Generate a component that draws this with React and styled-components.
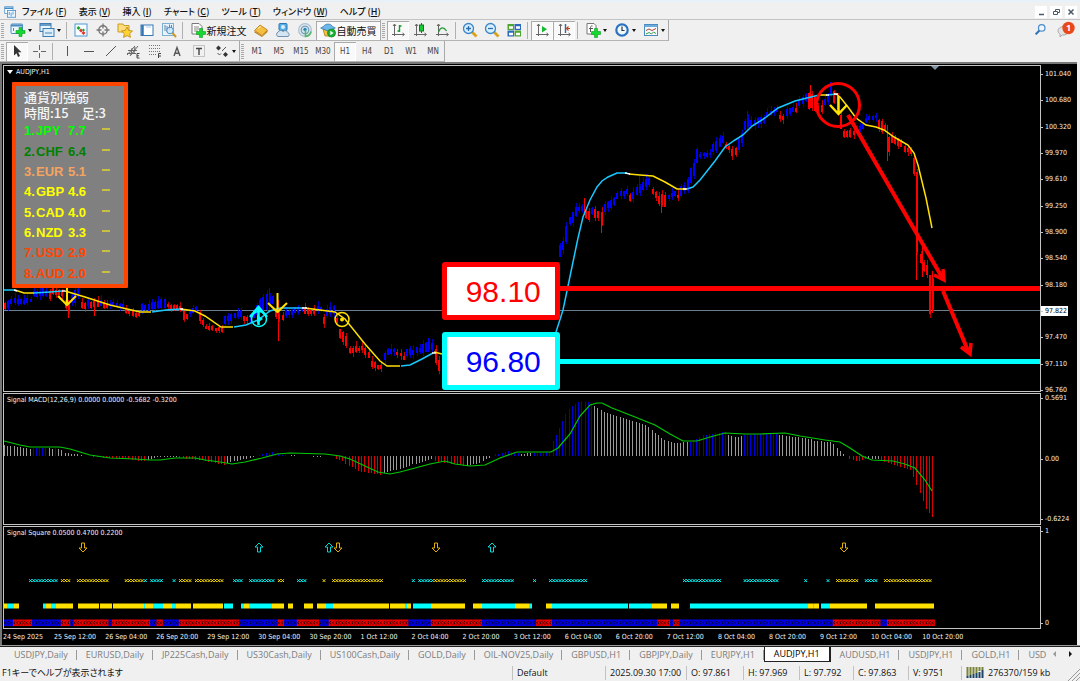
import React, { useState } from "react";
import styled, { createGlobalStyle } from "styled-components";

const GlobalStyle = createGlobalStyle`
  * { box-sizing: border-box; }
  body {
    margin: 0;
    background: #f0f0f0;
    font-family: "Open Sans", "Noto Sans CJK JP", sans-serif;
    font-size: 9px;
    color: #111;
  }
  button { font: inherit; color: inherit; border: 0; padding: 0; background: none; }
`;

const Window = styled.div`
  display: flex;
  flex-direction: column;
  height: 100vh;
  min-height: 500px;
  overflow: hidden;
`;

/* ---------- menu ---------- */

const MenuBar = styled.header`
  display: flex;
  align-items: center;
  height: 20px;
  padding: 2px 3px 0 4px;
  border-top: 2px solid #e9f1f8;
  border-bottom: 1px solid #c3c3c3;
`;

const MenuNav = styled.nav`
  display: flex;
  flex: 1;
  gap: 12px;
  padding-left: 6px;
`;

const MenuItem = styled.button`
  font-family: "Noto Sans CJK JP", sans-serif;
  font-size: 9px;
  font-weight: 500;
  line-height: 14px;
  font-feature-settings: "palt";
  white-space: nowrap;
`;

const WindowControls = styled.div`
  display: flex;
  gap: 3px;
`;

const ControlButton = styled.button`
  display: flex;
  width: 12px;
  height: 12px;
  background: #fff;
`;

/* ---------- toolbars ---------- */

const ToolbarRow = styled.div`
  display: flex;
  align-items: stretch;
  height: 21px;
`;

const Toolbar = styled.div`
  display: flex;
  align-items: center;
  border-right: 1px solid #a8a8a8;
  border-bottom: 1px solid #b4b4b4;
`;

const Spacer = styled.div`
  flex: 1;
`;

const Grip = styled.span`
  width: 3px;
  height: 15px;
  margin: 0 2px 0 1px;
  background: repeating-linear-gradient(#a9a9a9 0 1px, #f0f0f0 1px 2px);
`;

const Separator = styled.span`
  width: 1px;
  height: 17px;
  margin: 0 3px 0 2px;
  background: #b0b0b0;
`;

const ToolButton = styled.button`
  display: flex;
  align-items: center;
  justify-content: center;
  gap: 2px;
  width: ${({ $menu }) => ($menu ? 29 : 22)}px;
  height: 19px;
  background: ${({ $pressed }) => ($pressed ? "#f9f9f9" : "transparent")};
  box-shadow: ${({ $pressed }) =>
    $pressed ? "inset 1px 1px #aaa, inset -1px -1px #fff" : "none"};
`;

const LabelButton = styled(ToolButton)`
  width: auto;
  min-width: 64px;
  gap: 1px;
  font-family: "Noto Sans CJK JP", sans-serif;
  font-size: 10px;
  font-feature-settings: "palt";
  white-space: nowrap;
`;

const FrameButton = styled(ToolButton)`
  font-family: "DejaVu Sans Condensed", "DejaVu Sans", sans-serif;
  font-size: 8px;
  color: #444;
`;

const Corner = styled.div`
  display: flex;
  align-items: center;
  gap: 10px;
  padding-right: 5px;
`;

const Caret = styled.span`
  border: 2px solid transparent;
  border-top: 3px solid #111;
  border-bottom: 0;
`;

/* ---------- chart ---------- */

const ChartWindow = styled.main`
  flex: 1;
  min-height: 0;
  display: grid;
  grid-template-columns: minmax(0, 1fr) 36px;
  grid-template-rows: minmax(0, 327fr) minmax(0, 132fr) minmax(0, 103fr) 14px;
  row-gap: 1px;
  margin-right: 3px;
  padding: 1px 0 1px 1px;
  background: #000;
  border-top: 2px solid #777;
  border-left: 2px solid #777;
  color: #f2f2f2;
  font-family: "DejaVu Sans Condensed", "DejaVu Sans", sans-serif;
  font-size: 7px;
  line-height: 10px;
`;

const Pane = styled.section`
  position: relative;
  border: 1px solid #c4c4c4;
`;

const Plot = styled.svg`
  display: block;
  position: absolute;
  inset: 0;
  width: 100%;
  height: 100%;
`;

const PaneTitle = styled.h2`
  position: relative;
  display: flex;
  align-items: center;
  gap: 3px;
  margin: 1px 0 0 3px;
  font-size: 7px;
  font-weight: normal;
  line-height: 10px;
`;

const TitleCaret = styled(Caret)`
  border-width: 3px;
  border-top: 4px solid #fff;
  border-bottom: 0;
`;

const Scale = styled.div`
  display: flex;
  flex-direction: column;
  justify-content: space-between;
  margin: ${({ $price }) => ($price ? "4px 0 -3px" : "0 0 1px")};
`;

const ScaleLabel = styled.span`
  position: relative;
  align-self: flex-start;
  line-height: 10px;
  padding: 0 1px 0 4px;
  white-space: nowrap;
  ${({ $current }) => $current && "background: #fff; color: #000;"}
  &::before {
    content: "";
    position: absolute;
    left: -1px;
    top: 5px;
    width: 3px;
    height: 1px;
    background: #c4c4c4;
  }
`;

const TimeScale = styled.div`
  display: flex;
`;

const TimeLabel = styled.span`
  flex: 0 0 4.92%;
  line-height: 14px;
  white-space: nowrap;
`;

const StrengthPanel = styled.aside`
  position: absolute;
  left: 8px;
  top: 16px;
  width: 116px;
  padding: 3px 0 0 8px;
  background: #808080;
  border: 4px solid #ff4500;
  border-radius: 1px;
`;

const StrengthHeading = styled.p`
  margin: 0;
  color: #f4f4f4;
  font-family: "Noto Sans CJK JP", sans-serif;
  font-size: 13px;
  font-weight: 500;
  line-height: 16px;
  white-space: pre;
`;

const StrengthTable = styled.table`
  width: 100%;
  height: 163px;
  border-collapse: collapse;
  font-family: "Liberation Sans", sans-serif;
  font-size: 13px;
  font-weight: bold;
  line-height: 16px;
  td { padding: 0; }
`;

const StrengthRow = styled.tr`
  color: ${({ $color }) => $color};
`;

const Dash = styled.span`
  display: block;
  width: 8px;
  height: 2px;
  margin-bottom: 4px;
  background: #c8c040;
`;

const PriceTag = styled.div`
  position: absolute;
  left: 42.3%;
  top: ${({ $top }) => $top}%;
  width: 118px;
  height: 58px;
  padding-left: 4px;
  background: #fff;
  border: 5px solid ${({ $border }) => $border};
  border-radius: 3px;
  color: ${({ $color }) => $color};
  font-family: "Liberation Sans", sans-serif;
  font-size: 30px;
  line-height: 50px;
  text-align: center;
`;

/* ---------- bottom bars ---------- */

const TabBar = styled.div`
  display: flex;
  height: 19px;
  border-top: 1px solid #999;
  box-shadow: inset 0 1px #222;
`;

const Tabs = styled.nav`
  display: flex;
  flex: 1;
  min-width: 0;
  overflow: hidden;
  padding: 1px 0 0 5px;
`;

const Tab = styled.button`
  flex: none;
  height: 15px;
  padding: 0 9px;
  line-height: 14px;
  color: ${({ $active }) => ($active ? "#000" : "#7c7c7c")};
  white-space: nowrap;
  ${({ $active }) =>
    $active
      ? "background: #fff; border: solid #222; border-width: 0 2px 1px 1px;"
      : "background: linear-gradient(#999, #999) right center / 1px 10px no-repeat;"}
`;

const TabScroll = styled.div`
  display: flex;
  align-items: center;
  gap: 13px;
  padding: 0 8px 2px 5px;
`;

const ScrollArrow = styled.button`
  border: 3px solid transparent;
  ${({ $back }) =>
    $back ? "border-right: 3px solid #999; border-left: 0;" : "border-left: 3px solid #111; border-right: 0;"}
`;

const StatusBar = styled.footer`
  display: flex;
  align-items: center;
  height: 17px;
  padding-left: 2px;
  font-feature-settings: "palt";
`;

const StatusText = styled.span`
  flex: 1;
  white-space: nowrap;
`;

const StatusCell = styled.span`
  display: flex;
  align-items: center;
  gap: 3px;
  width: ${({ $width }) => $width}px;
  padding-left: 4px;
  border-left: 1px solid #c2c2c2;
  line-height: 14px;
  white-space: nowrap;
`;

/* ---------- icons ---------- */

const Icon = ({ children, size = 16 }) => (
  <svg width={size} height={size} viewBox="0 0 16 16" fill="none" aria-hidden="true">
    {children}
  </svg>
);

const Plus = ({ x = 11, y = 11 }) => (
  <path
    d={`M${x - 1.5} ${y - 4.5}h3v3h3v3h-3v3h-3v-3h-3v-3h3z`}
    fill="#14d92e"
    stroke="#0a9a20"
    strokeWidth=".6"
  />
);

const Axes = () => (
  <path d="M4.5 2v12M2 12.5h12M3 4l1.500-2L6 4M12.500 11l2 1.500-2 1.500" stroke="#666" />
);

const Lens = ({ minus }) => (
  <>
    <path d="M10 10l4.500 4.500" stroke="#d9a21b" strokeWidth="2.800" />
    <circle cx="6.500" cy="6.500" r="5" fill="#d7efff" stroke="#3c87c8" strokeWidth="1.300" />
    <path d={minus ? "M4 6.500h5" : "M4 6.500h5M6.500 4v5"} stroke="#2c6faf" strokeWidth="1.300" />
  </>
);

const icons = {
  logo: (
    <>
      <rect x="1" y="1" width="11" height="9" fill="#fff" stroke="#3d8ac7" />
      <path d="M1 3h11" stroke="#3d8ac7" strokeWidth="2" />
      <rect x="4.500" y="6" width="11" height="9" fill="#eaf5fc" stroke="#3d8ac7" />
      <path d="M7 8v4M9.500 9v5M12 7.500v4" stroke="#3d8ac7" />
    </>
  ),
  newChart: (
    <>
      <rect x="1" y="2" width="11.500" height="9.500" rx="1" fill="#eaf5fc" stroke="#4a8cc2" />
      <path d="M1 3.500h11.500" stroke="#4a8cc2" strokeWidth="2" />
      <path d="M3.500 6v3" stroke="#4a8cc2" />
      <Plus x={10.5} y={10} />
    </>
  ),
  profiles: (
    <>
      <rect x="1" y="1.500" width="11" height="8" fill="#eaf5fc" stroke="#3d7db5" />
      <path d="M1 3h11" stroke="#3d7db5" strokeWidth="1.500" />
      <rect x="4" y="6.500" width="11" height="8" fill="#dceefa" stroke="#3d7db5" />
      <path d="M6 11h7" stroke="#8fbbdd" strokeWidth="2" />
    </>
  ),
  market: (
    <>
      <rect x="2" y="2" width="12" height="12" fill="#f8fcff" stroke="#4d9ad0" />
      <path d="M5.500 4l2 2-2 2-2-2z" fill="#18a832" />
      <path d="M8 6.500l2 2-2 2-2-2zM10.500 9l2 2-2 2-2-2z" fill="#e2322b" />
      <path d="M10.500 6.500l1.500 1.500-1.500 1.500L9 8z" fill="#18a832" />
    </>
  ),
  navigator: (
    <>
      <circle cx="8" cy="8" r="4.200" stroke="#777" strokeWidth="1.400" />
      <path d="M8 1.500v5M8 9.500v5M1.500 8h5M9.500 8h5" stroke="#777" strokeWidth="1.300" />
    </>
  ),
  favorites: (
    <>
      <path d="M1 2h5l1 1.500h5V10H1z" fill="#ffdd7a" stroke="#c99a26" />
      <path
        d="M10 5l1.700 3.400 3.800.6-2.800 2.600.7 3.800-3.400-1.800-3.400 1.800.7-3.800L4.500 9l3.800-.6z"
        fill="#ffd332"
        stroke="#b98712"
        strokeWidth=".8"
      />
    </>
  ),
  terminal: (
    <>
      <rect x="2" y="3" width="12" height="10.500" fill="#fff" stroke="#3476b4" />
      <path d="M3.500 3v10.500" stroke="#3476b4" strokeWidth="2.500" />
      <path d="M7 5h5" stroke="#aacde8" />
    </>
  ),
  tester: (
    <>
      <rect x="1.500" y="1.500" width="11" height="12" fill="#e7f4fd" stroke="#7fb0d4" />
      <path d="M4 3v6M6 4v6M8.500 2.500V8M10.500 3v3" stroke="#5f84a3" />
      <circle cx="9" cy="8.500" r="3.300" fill="#cce8fa" fillOpacity=".8" stroke="#4f8fc4" />
      <path d="M11.500 11l3.500 4" stroke="#c99a26" strokeWidth="2" />
    </>
  ),
  newOrder: (
    <>
      <path d="M2 1.500h7l3 3V12H2z" fill="#fff" stroke="#777" />
      <path d="M4 5h5M4 7h5M4 9h4" stroke="#888" />
      <Plus x={11} y={11} />
    </>
  ),
  gold: (
    <>
      <path d="M1.500 8.500l5.500-5.500 7.500 5-5.500 5.500z" fill="#f5be3e" stroke="#b57a14" strokeWidth=".8" />
      <path d="M1.500 9l7.500 5 5.500-6v2l-5.500 5-7.500-4.500z" fill="#b97c11" />
      <path d="M5 6.500l3-2" stroke="#fff0b0" />
    </>
  ),
  hosting: (
    <>
      <rect x="4" y="1.500" width="8" height="7" rx="1" fill="#55aee8" stroke="#2c76b3" />
      <circle cx="8" cy="5" r="2" fill="#d5effd" />
      <path d="M3 14.500a2.300 2.300 0 010-4.300 3 3 0 015-.7 3 3 0 015 1.300 2 2 0 010 3.700z" fill="#d4e4f0" stroke="#6f93b2" />
    </>
  ),
  signals: (
    <>
      <circle cx="8" cy="8" r="6.300" stroke="#a9c2d4" strokeWidth="1.300" />
      <circle cx="8" cy="8" r="3.800" fill="#d3e8f2" stroke="#6f9dbb" strokeWidth="1.300" />
      <circle cx="8" cy="7.500" r="1.700" fill="#2f84b4" />
      <path d="M8.500 8v6.500c3-.5 5-2 5.500-5" stroke="#58b46a" strokeWidth="1.600" />
    </>
  ),
  expert: (
    <>
      <path d="M3 7l2 7h6l2-7z" fill="#f3c33a" stroke="#a87b18" strokeWidth=".8" />
      <path d="M.7 6c1-1 2.800-1 3.300-2C5 1.500 11 1.500 12 4c.5 1 2.300 1 3.300 2L8 9z" fill="#6db8ea" stroke="#2f74a8" strokeWidth=".8" />
      <circle cx="11.500" cy="11" r="4" fill="#1eb235" stroke="#0b8a1c" strokeWidth=".8" />
      <path d="M10.300 8.800l3.200 2.200-3.200 2.200z" fill="#fff" />
    </>
  ),
  bars: (
    <>
      <Axes />
      <path d="M9.500 3v7M9.500 4h2M7.500 9h2" stroke="#159a2b" strokeWidth="1.400" />
    </>
  ),
  candles: (
    <>
      <Axes />
      <path d="M9.500 1v10" stroke="#0d7c1d" />
      <rect x="7.500" y="3" width="4" height="6" fill="#1cc936" stroke="#0d7c1d" />
    </>
  ),
  line: (
    <>
      <Axes />
      <path d="M4.500 10c2-5 5-5.500 8-1" stroke="#219a33" strokeWidth="1.300" />
    </>
  ),
  zoomIn: <Lens />,
  zoomOut: <Lens minus />,
  tile: (
    <>
      <rect x="1.500" y="2" width="6.500" height="6" fill="#4da532" />
      <rect x="8.500" y="2" width="6.500" height="6" fill="#2c69bd" />
      <rect x="1.500" y="8.500" width="6.500" height="6" fill="#2c69bd" />
      <rect x="8.500" y="8.500" width="6.500" height="6" fill="#4da532" />
      <path d="M3 5.500h4M10 5.500h4M3 12h4M10 12h4" stroke="#fff" strokeWidth="2.500" />
    </>
  ),
  autoScroll: (
    <>
      <Axes />
      <path d="M8 4l5 3.300-5 3.300z" fill="#19b832" />
    </>
  ),
  shift: (
    <>
      <Axes />
      <path d="M9.500 2v9" stroke="#2b6ba6" strokeWidth="1.400" />
      <path d="M14 6.500h-3.500M12.500 4.500l-2 2 2 2" stroke="#c4471f" strokeWidth="1.200" />
    </>
  ),
  indicators: (
    <>
      <path d="M2 1.500h7l2 2V12H2z" fill="#fff" stroke="#777" />
      <path d="M7.500 4c-2-.5-2 1-2 2.500V10M4 6.500h4" stroke="#555" />
      <Plus x={11} y={11} />
    </>
  ),
  clock: (
    <>
      <circle cx="8" cy="8" r="5.700" fill="#eef8ff" stroke="#2a72c0" strokeWidth="2.200" />
      <path d="M8 4.500v4h2.500" stroke="#333" strokeWidth="1.200" />
    </>
  ),
  template: (
    <>
      <rect x="1.500" y="2.500" width="13" height="11" fill="#f4faff" stroke="#4a8cc2" />
      <path d="M1.500 4h13" stroke="#6fabda" strokeWidth="2" />
      <path d="M3 8.500l3-1.500 3 1.500 4-2" stroke="#b0432a" />
      <path d="M3 12l3-1.500L8.500 12l2-2 2.500 1.500" stroke="#3d9a49" />
    </>
  ),
  search: (
    <>
      <path d="M7 9l-5 5" stroke="#2d6fb7" strokeWidth="2.600" />
      <circle cx="9.500" cy="6" r="4" fill="#eef6fc" stroke="#4b8bc9" strokeWidth="1.500" />
    </>
  ),
  cursor: <path d="M5 2v10.500l2.500-2.300L9 14l2-1-1.800-3.800h3.300z" fill="#333" />,
  crosshair: <path d="M8.500 2v5M8.500 10v5M2 8.500h5M10 8.500h5" stroke="#666" />,
  vline: <path d="M8.500 3v10" stroke="#555" />,
  hline: <path d="M3 8.500h10" stroke="#555" />,
  trend: <path d="M3 13L13 3" stroke="#555" />,
  channel: (
    <>
      <path d="M2 12L10 3M5 13L13 3M3 7.500h9M2 10.500h9M6 12l1-7M9 10l1-6" stroke="#666" />
      <path d="M14.500 10.500h-2.500v4.500h2.500M12 12.800h2" stroke="#444" />
    </>
  ),
  fibo: (
    <>
      <path d="M2 2.500h12M2 5.500h12M2 8.500h12M2 11.500h7" stroke="#777" strokeDasharray="1 1" />
      <path d="M11.500 15v-4.500H14M11.500 13H14" stroke="#444" />
    </>
  ),
  text: <path d="M5 13l3-8.500L11 13M6 10.200h4" stroke="#555" strokeWidth="1.400" />,
  label: (
    <>
      <rect x="2.500" y="2.500" width="11" height="11" stroke="#999" strokeDasharray="1 1" />
      <path d="M5 5.500h6M8 5.500V12" stroke="#444" strokeWidth="1.400" />
    </>
  ),
  arrows: (
    <>
      <path d="M4.500 2.500l2.500 2.500-2.500 2.500L2 5zM11.500 9l2.500 2.500-2.500 2.500L9 11.500z" fill="#333" />
      <path d="M8 8l4-4M3.500 10l2 2 1.500-1.500" stroke="#555" />
    </>
  ),
};

/* ---------- chart data ---------- */

const MENU = [
  ["ファイル", "F"],
  ["表示", "V"],
  ["挿入", "I"],
  ["チャート", "C"],
  ["ツール", "T"],
  ["ウィンドウ", "W"],
  ["ヘルプ", "H"],
];

const FRAMES = ["M1", "M5", "M15", "M30", "H1", "H4", "D1", "W1", "MN"];

const STRENGTH = [
  ["JPY", "7.7", "#00ff00"],
  ["CHF", "6.4", "#008000"],
  ["EUR", "5.1", "#f4a460"],
  ["GBP", "4.6", "#ffff00"],
  ["CAD", "4.0", "#ffff00"],
  ["NZD", "3.3", "#ffff00"],
  ["USD", "2.9", "#ff4500"],
  ["AUD", "2.0", "#ff4500"],
];

const PRICES = [
  "101.040", "100.680", "100.320", "99.970", "99.610", "99.250", "98.900",
  "98.540", "98.180", "97.822", "97.470", "97.110", "96.760",
];

const TIMES = [
  "24 Sep 2025", "25 Sep 12:00", "26 Sep 04:00", "26 Sep 20:00", "29 Sep 12:00",
  "30 Sep 04:00", "30 Sep 20:00", "1 Oct 12:00", "2 Oct 04:00", "2 Oct 20:00",
  "3 Oct 12:00", "6 Oct 04:00", "6 Oct 20:00", "7 Oct 12:00", "8 Oct 04:00",
  "8 Oct 20:00", "9 Oct 12:00", "10 Oct 04:00", "10 Oct 20:00",
];

const TABS = [
  "USDJPY,Daily", "EURUSD,Daily", "JP225Cash,Daily", "US30Cash,Daily",
  "US100Cash,Daily", "GOLD,Daily", "OIL-NOV25,Daily", "GBPUSD,H1", "GBPJPY,Daily",
  "EURJPY,H1", "AUDJPY,H1", "AUDUSD,H1", "USDJPY,H1", "GOLD,H1", "USD",
];

const UP = "#0000ff";
const DOWN = "#ff0000";
const AQUA = "#00ffff";
const GOLD = "#ffe000";
const STEP = 3.19;

// [from x, to x, colour, centre y at start, centre y at end, body height]
const RUNS = [
  [5, 6, DOWN, 307, 307, 6], [8, 17, UP, 304, 299, 6], [18, 30, UP, 302, 301, 5],
  [31, 46, UP, 294, 292, 7], [47, 52, DOWN, 293, 296, 9], [53, 62, DOWN, 291, 293, 6],
  [63, 70, DOWN, 303, 307, 11], [71, 79, UP, 300, 293, 12], [80, 86, DOWN, 305, 307, 9],
  [87, 90, UP, 303, 303, 6], [91, 97, DOWN, 306, 304, 7], [98, 103, UP, 301, 303, 7],
  [104, 108, DOWN, 305, 307, 6], [109, 124, UP, 304, 305, 4], [125, 140, DOWN, 311, 315, 5],
  [141, 165, UP, 308, 304, 8], [166, 180, DOWN, 306, 308, 5], [181, 188, DOWN, 314, 318, 7],
  [189, 196, UP, 313, 310, 6], [197, 203, DOWN, 314, 322, 8], [204, 222, DOWN, 328, 330, 4],
  [223, 241, UP, 321, 314, 7], [242, 250, DOWN, 317, 321, 5], [251, 258, UP, 318, 310, 8],
  [259, 273, UP, 305, 301, 13], [274, 282, DOWN, 313, 318, 6], [283, 303, UP, 314, 309, 5],
  [304, 317, DOWN, 310, 312, 6], [318, 322, UP, 309, 309, 4], [323, 325, DOWN, 321, 321, 8],
  [326, 334, UP, 312, 311, 7], [335, 339, DOWN, 317, 326, 9], [340, 348, DOWN, 333, 343, 9],
  [349, 362, DOWN, 350, 349, 5], [363, 371, DOWN, 350, 357, 7], [372, 381, DOWN, 364, 367, 5],
  [382, 385, UP, 359, 355, 9], [386, 396, UP, 353, 349, 5], [397, 405, DOWN, 354, 358, 4],
  [406, 420, UP, 353, 350, 6], [421, 433, UP, 348, 346, 8], [434, 441, DOWN, 349, 374, 14],
  [558, 563, UP, 255, 245, 12], [564, 569, UP, 240, 229, 13], [570, 578, UP, 221, 209, 10],
  [579, 583, UP, 208, 209, 5], [584, 589, DOWN, 214, 215, 9], [590, 592, UP, 212, 212, 6],
  [593, 600, DOWN, 214, 214, 10], [600, 604, DOWN, 218, 218, 15], [605, 616, UP, 208, 201, 7],
  [617, 627, UP, 196, 191, 5], [628, 631, DOWN, 198, 199, 8], [632, 640, UP, 196, 189, 8],
  [641, 650, UP, 187, 181, 8], [651, 657, DOWN, 190, 195, 7], [658, 665, DOWN, 200, 200, 10],
  [666, 675, UP, 197, 194, 4], [676, 678, DOWN, 197, 197, 4], [679, 690, UP, 192, 183, 10],
  [691, 696, UP, 176, 164, 12], [697, 699, UP, 157, 157, 16], [700, 712, UP, 155, 154, 4],
  [713, 723, UP, 149, 139, 8], [724, 731, DOWN, 146, 149, 5], [732, 735, DOWN, 152, 152, 7],
  [736, 742, UP, 149, 138, 13], [743, 749, UP, 127, 121, 10], [750, 766, UP, 124, 119, 7],
  [767, 779, UP, 114, 109, 5], [780, 783, DOWN, 118, 118, 5], [784, 794, UP, 114, 108, 6],
  [795, 798, DOWN, 110, 110, 5], [799, 808, UP, 103, 96, 7], [809, 815, DOWN, 101, 103, 14],
  [816, 822, DOWN, 108, 108, 6], [823, 829, UP, 104, 98, 8], [830, 833, UP, 89, 89, 11],
  [834, 838, DOWN, 96, 104, 16], [839, 843, DOWN, 117, 128, 12], [844, 855, DOWN, 133, 134, 6],
  [856, 865, UP, 130, 125, 4], [866, 876, UP, 120, 117, 4], [877, 885, DOWN, 123, 128, 9],
  [886, 888, DOWN, 140, 140, 29], [889, 891, DOWN, 144, 144, 20], [892, 901, DOWN, 140, 144, 6],
  [902, 911, DOWN, 148, 152, 5], [912, 914, DOWN, 165, 165, 19], [915, 917, DOWN, 212, 212, 76],
  [918, 923, DOWN, 257, 261, 9], [924, 929, DOWN, 267, 273, 9], [930, 933, DOWN, 294, 294, 34],
];

const WICKS = [
  [278, 300, 341, DOWN], [269, 288, 310, UP], [584, 198, 215, DOWN], [601, 215, 233, DOWN],
  [661, 200, 213, DOWN], [639, 176, 190, UP], [747, 111, 130, UP], [810, 85, 108, DOWN],
  [68, 300, 318, DOWN], [887, 125, 161, DOWN], [916, 240, 280, DOWN], [922, 244, 277, DOWN],
  [932, 271, 313, DOWN], [94, 300, 316, DOWN], [428, 338, 352, UP],
];

const noise = (n) => {
  const v = Math.sin(n * 12.9898) * 43758.5453;
  return v - Math.floor(v);
};

const barX = (i) => 5 + i * STEP;

const CANDLES = [];
for (let i = 0; i < 292; i++) {
  const x = barX(i);
  const run = RUNS.find(([a, b]) => x >= a - 0.6 && x <= b + 0.6);
  if (!run) continue;
  const [a, b, color, y0, y1, h] = run;
  const t = b > a ? Math.min(1, Math.max(0, (x - a) / (b - a))) : 0;
  const mid = y0 + (y1 - y0) * t + (noise(i) - 0.5) * 2;
  const body = h * (0.65 + noise(i + 40) * 0.55);
  CANDLES.push({
    x: Math.round(x),
    color,
    top: mid - body / 2,
    body,
    high: mid - body / 2 - noise(i + 7) * 5,
    low: mid + body / 2 + noise(i + 19) * 4,
  });
}

const AVERAGE = [
  [AQUA, "4,290 15,290"],
  [GOLD, "15,290 24,293 34,293"],
  [AQUA, "34,293 50,292 62,291"],
  [GOLD, "65,291 85,297 110,305 140,312 151,312"],
  [AQUA, "152,312 166,310 180,309"],
  [GOLD, "181,309 195,311 205,316 221,327 233,327"],
  [AQUA, "234,327 246,325 258,320 270,311 280,308 304,308"],
  [GOLD, "305,308 320,310 335,312 345,319 365,344 380,361 387,366 400,366"],
  [AQUA, "401,366 410,365 422,359 433,353"],
  [GOLD, "434,352 442,354"],
  [AQUA, "556,332 563,310 568,286 573,262 578,238 583,217 590,200 597,187 602,181 608,177 617,173 627,173"],
  [GOLD, "629,174 640,175 653,176 665,182 677,189 686,189"],
  [AQUA, "687,189 693,187 700,180 715,161 725,147 735,140 743,135 752,126 765,118 778,108 795,101 815,96 820,95"],
  [GOLD, "820,95 827,95"],
  [AQUA, "828,95 836,94"],
  [GOLD, "836,94 840,97 848,107 856,118 866,125 876,127 884,130 894,137 908,145 914,153 918,165 926,198 932,228"],
];

const TURNS = [
  "14,290 17,291", "62,291 65,291", "180,309 183,309", "302,308 307,308", "432,353 436,353",
  "625,173 630,174", "683,189 687,189", "826,95 829,95", "834,94 838,94",
];

const GREY = "#9a9a9a";
const BLUE = "#0000d8";
const RED = "#d80000";

// [from x, to x, colour, height at start, height at end]
const MACD = [
  [4, 33, GREY, 11, 7], [34, 46, BLUE, 8, 8], [47, 54, GREY, 8, 7], [55, 57, BLUE, 8, 8],
  [58, 65, GREY, 7, 5], [66, 84, GREY, 3, 1], [93, 130, RED, -1, -3], [131, 146, RED, -4, -5],
  [147, 156, GREY, -4, -2], [157, 179, GREY, -1, -1], [180, 200, RED, -2, -4],
  [201, 226, RED, -4, -9], [227, 256, GREY, -7, -1], [259, 274, BLUE, 1, 4],
  [275, 286, BLUE, 2, 1], [290, 322, GREY, 1, -1], [335, 345, RED, -2, -6],
  [346, 358, RED, -8, -14], [359, 384, RED, -15, -19], [385, 410, GREY, -17, -10],
  [411, 434, GREY, -9, -3], [435, 465, RED, -5, -10], [466, 480, GREY, -10, -7],
  [481, 491, GREY, -6, -1], [494, 510, BLUE, 1, 5], [511, 519, BLUE, 4, 3],
  [520, 532, GREY, 2, 3], [533, 550, BLUE, 3, 4], [551, 568, BLUE, 9, 45],
  [569, 580, BLUE, 47, 55], [581, 593, BLUE, 55, 53], [594, 606, GREY, 51, 43],
  [607, 632, GREY, 43, 36], [633, 648, GREY, 35, 31], [649, 662, GREY, 29, 18],
  [663, 675, GREY, 17, 13], [676, 690, GREY, 13, 14], [691, 702, BLUE, 14, 20],
  [703, 726, BLUE, 21, 24], [727, 736, GREY, 21, 19], [737, 743, GREY, 19, 20],
  [744, 779, BLUE, 21, 23], [780, 812, GREY, 21, 17], [813, 832, GREY, 15, 14],
  [833, 845, GREY, 13, 1], [848, 858, RED, -2, -5], [859, 868, RED, -5, -3],
  [869, 879, GREY, -3, -3], [880, 912, RED, -4, -14], [913, 924, RED, -18, -46],
  [925, 934, RED, -50, -62],
];

const SIGNAL_LINE =
  "4,441 20,445 30,447 60,447 70,449 90,455 110,458 135,459 150,460 160,460 175,458 195,458 205,460 220,462 232,464 245,462 262,458 277,454 290,453 325,454 340,456 350,459 365,466 378,472 390,474 400,472 430,464 445,461 455,464 470,466 485,465 500,458 517,452 551,452 558,448 570,434 580,416 590,405 597,403 602,403 612,408 630,415 655,425 670,434 683,441 697,441 710,437 725,433 745,434 760,434 785,433 800,436 825,440 840,442 850,448 862,456 872,460 893,461 905,464 915,468 925,480 932,491";

const MACD_BARS = [];
for (let i = 0; i < 292; i++) {
  const x = barX(i);
  const seg = MACD.find(([a, b]) => x >= a - 0.6 && x <= b + 0.6);
  if (!seg) continue;
  const [a, b, color, h0, h1] = seg;
  const h = h0 + ((h1 - h0) * (x - a)) / (b - a);
  MACD_BARS.push({ x: Math.round(x), color, h });
}

const CROSSES = [
  [31, 46, AQUA], [49, 56, AQUA], [60, 68, GOLD], [79, 97, GOLD], [101, 107, GOLD],
  [124, 141, GOLD], [143, 145, AQUA], [152, 158, AQUA], [162, 163, AQUA], [172, 173, AQUA],
  [178, 190, GOLD], [197, 222, GOLD], [235, 240, AQUA], [251, 273, AQUA], [277, 282, GOLD],
  [299, 304, AQUA], [309, 310, GOLD], [322, 323, GOLD], [334, 381, GOLD], [414, 415, AQUA],
  [420, 432, AQUA], [436, 464, GOLD], [484, 512, AQUA], [535, 536, AQUA], [545, 546, AQUA],
  [551, 585, AQUA], [682, 721, AQUA], [745, 776, AQUA], [806, 807, AQUA], [828, 829, AQUA],
  [838, 853, GOLD], [857, 858, GOLD], [867, 875, AQUA], [886, 932, GOLD],
];

const BLOCKS = [
  [4, 7, GOLD], [7, 14, AQUA], [14, 19, GOLD], [43, 46, AQUA], [46, 51, GOLD], [51, 56, AQUA],
  [56, 73, GOLD], [78, 99, GOLD], [100, 112, GOLD], [113, 144, GOLD], [144, 145, AQUA],
  [145, 153, GOLD], [153, 163, AQUA], [163, 172, GOLD], [172, 176, AQUA], [176, 191, GOLD],
  [193, 223, GOLD], [224, 233, AQUA], [241, 244, AQUA], [244, 249, GOLD], [249, 272, AQUA],
  [272, 284, GOLD], [288, 293, GOLD], [304, 313, GOLD], [317, 326, GOLD], [326, 333, AQUA],
  [333, 389, GOLD], [390, 405, GOLD], [405, 407, AQUA], [407, 411, GOLD], [413, 431, AQUA],
  [431, 465, GOLD], [473, 482, GOLD], [482, 515, AQUA], [515, 529, GOLD], [529, 532, AQUA],
  [546, 552, GOLD], [552, 628, AQUA], [629, 652, AQUA], [652, 667, GOLD], [671, 679, GOLD],
  [690, 808, AQUA], [808, 813, GOLD], [813, 814, AQUA], [814, 819, GOLD], [821, 830, AQUA],
  [830, 867, GOLD], [875, 934, GOLD],
];

const TREND_FLIPS = [
  [4, UP], [12, DOWN], [33, UP], [60, DOWN], [71, UP], [74, DOWN], [108, UP], [113, DOWN],
  [150, UP], [157, DOWN], [163, UP], [178, DOWN], [240, UP], [277, DOWN], [285, UP],
  [297, DOWN], [318, UP], [329, DOWN], [409, UP], [430, DOWN], [483, UP], [535, DOWN],
  [552, UP], [657, DOWN], [671, UP], [674, DOWN], [680, UP], [832, DOWN], [881, UP],
  [887, DOWN],
];

const trendAt = (x) => TREND_FLIPS.filter(([from]) => from <= x).pop()[1];

const SQUARE_ARROWS = [
  [83, GOLD, 1], [259, AQUA, -1], [329, AQUA, -1], [338, GOLD, 1], [436, GOLD, 1],
  [492, AQUA, -1], [844, GOLD, 1],
];

/* ---------- chart drawings ---------- */

function PricePlot() {
  return (
    <Plot viewBox="4 66 1036 325" preserveAspectRatio="none" fill="none">
      <path d="M4 310.500H1040" stroke="#6d7f8c" />
      <g shapeRendering="crispEdges">
        {CANDLES.map((c) => (
          <g key={c.x}>
            <path d={`M${c.x + 0.5} ${c.high}V${c.low}`} stroke={c.color} strokeOpacity=".75" />
            <rect x={c.x - 1} y={c.top} width="2" height={c.body} fill={c.color} />
          </g>
        ))}
        {WICKS.map(([x, y1, y2, color]) => (
          <path key={x} d={`M${x + 0.5} ${y1}V${y2}`} stroke={color} />
        ))}
      </g>
      {AVERAGE.map(([color, points]) => (
        <polyline key={points} points={points} stroke={color === AQUA ? "#19c8ff" : color} strokeWidth="1.500" />
      ))}
      {TURNS.map((points) => (
        <polyline key={points} points={points} stroke="#fff" strokeWidth="1.500" />
      ))}
      <path d="M931 66h8l-4 4z" fill="#8296a8" />

      <g stroke={GOLD} strokeWidth="2">
        <path d="M67 288v17M58 296l9 9 9-9" />
        <path d="M277.500 293v19M268 303l9.500 9 9.500-9" />
        <circle cx="342" cy="319.500" r="7" strokeWidth="1.500" />
        <circle cx="342" cy="319.500" r="2" fill={GOLD} stroke="none" />
        <path d="M838.500 96v17M830 105l8.500 9 8.500-9" strokeWidth="2.500" />
      </g>
      <g stroke={AQUA} strokeWidth="2">
        <path d="M258.500 307v18M250 317l8.500-10 8.500 10" strokeWidth="2.500" />
        <circle cx="259" cy="319" r="7.500" strokeWidth="1.500" />
        <path d="M257 315l6 4-6 4z" fill={AQUA} stroke="none" />
      </g>

      <path d="M556 288.500H1040" stroke="#f00" strokeWidth="5" />
      <path d="M556 361.500H1040" stroke={AQUA} strokeWidth="5" />
      <g stroke="#f00">
        <circle cx="838" cy="105" r="21.500" strokeWidth="3" />
        <path d="M848 115L943 279M943 291L969 353" strokeWidth="4" />
        <path d="M934 275l10 5-1-11M961 347l9 7 1-11" strokeWidth="3.500" />
      </g>
    </Plot>
  );
}

function MacdPlot() {
  return (
    <Plot viewBox="4 394 1036 130" preserveAspectRatio="none" fill="none">
      <g shapeRendering="crispEdges">
        {MACD_BARS.map(({ x, color, h }) => (
          <path key={x} d={`M${x - 0.5} 456V${456 - h}`} stroke={color} />
        ))}
      </g>
      <polyline points={SIGNAL_LINE} stroke="#00c800" strokeWidth="1.200" />
    </Plot>
  );
}

function SquarePlot() {
  const bars = Array.from({ length: 292 }, (_, i) => barX(i));
  const crosses = bars
    .map((x) => [x, CROSSES.find(([a, b]) => x >= a - 0.7 && x <= b + 1.2)])
    .filter(([, run]) => run);

  return (
    <Plot viewBox="4 527 1036 101" preserveAspectRatio="none" fill="none">
      {SQUARE_ARROWS.map(([x, color, dir]) => (
        <path
          key={x}
          transform={`translate(${x} 547.5) scale(1 ${dir})`}
          d="M-1.500-4.500h3v5h2.500L0 4.500-4 .5h2.500z"
          stroke={color === GOLD ? "#e0b000" : "#00d8d8"}
        />
      ))}
      {crosses.map(([x, [, , color]]) => (
        <path
          key={x}
          d={`M${x - 1.4} 579.2l2.800 2.800M${x + 1.4} 579.2l-2.800 2.800`}
          stroke={color}
          strokeWidth="1"
        />
      ))}
      {BLOCKS.map(([a, b, color]) => (
        <rect key={a} x={a} y="603.500" width={b - a} height="5" fill={color} />
      ))}
      {bars.map((x) => (
        <g key={x}>
          <rect x={x - 1.6} y="619.500" width="3.200" height="6.500" fill={trendAt(x)} fillOpacity=".92" />
          <path d={`M${x + 0.4} 621.200l-1.200 1.600 1.200 1.600`} stroke="#000" strokeWidth=".9" />
        </g>
      ))}
    </Plot>
  );
}

function Tool({ icon, label, ...props }) {
  return (
    <ToolButton aria-label={label} {...props}>
      <Icon>{icons[icon]}</Icon>
      {props.$menu && <Caret />}
    </ToolButton>
  );
}

function App() {
  const [frame, setFrame] = useState("H1");
  const [tab, setTab] = useState("AUDJPY,H1");

  return (
    <Window>
      <GlobalStyle />
      <MenuBar>
        <Icon size={12}>{icons.logo}</Icon>
        <MenuNav>
          {MENU.map(([name, key]) => (
            <MenuItem key={name}>
              {name} (<u>{key}</u>)
            </MenuItem>
          ))}
        </MenuNav>
        <WindowControls>
          <ControlButton aria-label="最小化">
            <svg width="12" height="12"><path d="M4 8.500h5" stroke="#4a5a68" strokeWidth="1.500" /></svg>
          </ControlButton>
          <ControlButton aria-label="元に戻す">
            <svg width="12" height="12" fill="none" stroke="#4a5a68"><path d="M5.500 5V3.500h4v3H8M3.500 5.500h4v3h-4z" /></svg>
          </ControlButton>
          <ControlButton aria-label="閉じる">
            <svg width="12" height="12"><path d="M3.500 3.500l5 5M8.500 3.500l-5 5" stroke="#4a5a68" strokeWidth="1.500" /></svg>
          </ControlButton>
        </WindowControls>
      </MenuBar>

      <ToolbarRow>
        <Toolbar>
          <Grip />
          <Tool icon="newChart" label="新規チャート" $menu />
          <Tool icon="profiles" label="チャートの組表示" $menu />
          <Separator />
          <Tool icon="market" label="気配値表示" />
          <Tool icon="navigator" label="データウィンドウ" />
          <Tool icon="favorites" label="ナビゲーター" />
          <Tool icon="terminal" label="ターミナル" />
          <Tool icon="tester" label="ストラテジーテスター" />
          <Separator />
          <LabelButton>
            <Icon>{icons.newOrder}</Icon>新規注文
          </LabelButton>
          <Tool icon="gold" label="メタエディター" />
          <Tool icon="hosting" label="ホスティング" />
          <Tool icon="signals" label="シグナル" />
          <LabelButton $pressed>
            <Icon>{icons.expert}</Icon>自動売買
          </LabelButton>
        </Toolbar>
        <Toolbar>
          <Grip />
          <Tool icon="bars" label="バーチャート" $pressed />
          <Tool icon="candles" label="ローソク足" />
          <Tool icon="line" label="ラインチャート" />
          <Separator />
          <Tool icon="zoomIn" label="拡大" />
          <Tool icon="zoomOut" label="縮小" />
          <Tool icon="tile" label="整列" />
          <Separator />
          <Tool icon="autoScroll" label="自動スクロール" $pressed />
          <Tool icon="shift" label="チャートシフト" $pressed />
          <Separator />
          <Tool icon="indicators" label="インディケータ" $menu />
          <Tool icon="clock" label="時間足設定" $menu />
          <Tool icon="template" label="テンプレート" $menu />
        </Toolbar>
        <Spacer />
        <Corner>
          <button aria-label="検索">
            <Icon size={13}>{icons.search}</Icon>
          </button>
          <button aria-label="通知">
            <svg width="18" height="17" viewBox="0 0 18 17">
              <path d="M1 10c0-5 9-6 10-1s-4 5-6 5l-2 2v-3c-1-.6-2-1.500-2-3z" fill="#e4e4e4" stroke="#aaa" />
              <circle cx="11.500" cy="7" r="6.200" fill="#e8491b" />
              <text x="11.500" y="10" fill="#fff" fontSize="9" fontWeight="bold" textAnchor="middle">1</text>
            </svg>
          </button>
        </Corner>
      </ToolbarRow>

      <ToolbarRow>
        <Toolbar>
          <Grip />
          <Tool icon="cursor" label="カーソル" $pressed />
          <Tool icon="crosshair" label="クロスヘア" />
          <Separator />
          <Tool icon="vline" label="垂直線" />
          <Tool icon="hline" label="水平線" />
          <Tool icon="trend" label="トレンドライン" />
          <Tool icon="channel" label="平行チャネル" />
          <Tool icon="fibo" label="フィボナッチ" />
          <Tool icon="text" label="テキスト" />
          <Tool icon="label" label="ラベル" />
          <Tool icon="arrows" label="矢印" $menu />
        </Toolbar>
        <Toolbar>
          <Grip />
          {FRAMES.map((name) => (
            <FrameButton key={name} $pressed={name === frame} onClick={() => setFrame(name)}>
              {name}
            </FrameButton>
          ))}
        </Toolbar>
      </ToolbarRow>

      <ChartWindow>
        <Pane>
          <PricePlot />
          <PaneTitle>
            <TitleCaret />
            AUDJPY,H1
          </PaneTitle>
          <StrengthPanel>
            <StrengthHeading>通貨別強弱</StrengthHeading>
            <StrengthHeading>時間:15　足:3</StrengthHeading>
            <StrengthTable>
              <tbody>
                {STRENGTH.map(([code, value, color], i) => (
                  <StrengthRow key={code} $color={color}>
                    <td width="12">{i + 1}.</td>
                    <td width="32">{code}</td>
                    <td width="34">{value}</td>
                    <td><Dash /></td>
                  </StrengthRow>
                ))}
              </tbody>
            </StrengthTable>
          </StrengthPanel>
          <PriceTag $top={60.3} $border="#ff0000" $color="#ff0000">98.10</PriceTag>
          <PriceTag $top={81.8} $border="#00ffff" $color="#0000ff">96.80</PriceTag>
        </Pane>
        <Scale $price>
          {PRICES.map((price) => (
            <ScaleLabel key={price} $current={price === "97.822"}>{price}</ScaleLabel>
          ))}
        </Scale>

        <Pane>
          <MacdPlot />
          <PaneTitle>Signal MACD(12,26,9) 0.0000 0.0000 -0.5682 -0.3200</PaneTitle>
        </Pane>
        <Scale>
          <ScaleLabel>0.5691</ScaleLabel>
          <ScaleLabel>0.00</ScaleLabel>
          <ScaleLabel>-0.6224</ScaleLabel>
        </Scale>

        <Pane>
          <SquarePlot />
          <PaneTitle>Signal Square 0.0500 0.4700 0.2200</PaneTitle>
        </Pane>
        <Scale>
          <ScaleLabel>1</ScaleLabel>
          <ScaleLabel>0</ScaleLabel>
        </Scale>

        <TimeScale>
          {TIMES.map((time) => (
            <TimeLabel key={time}>{time}</TimeLabel>
          ))}
        </TimeScale>
      </ChartWindow>

      <TabBar>
        <Tabs>
          {TABS.map((name) => (
            <Tab key={name} $active={name === tab} onClick={() => setTab(name)}>
              {name}
            </Tab>
          ))}
        </Tabs>
        <TabScroll>
          <ScrollArrow $back aria-label="前へ" />
          <ScrollArrow aria-label="次へ" />
        </TabScroll>
      </TabBar>

      <StatusBar>
        <StatusText>F1キーでヘルプが表示されます</StatusText>
        <StatusCell $width={93}>Default</StatusCell>
        <StatusCell $width={81}>2025.09.30 17:00</StatusCell>
        <StatusCell $width={57}>O: 97.861</StatusCell>
        <StatusCell $width={56}>H: 97.969</StatusCell>
        <StatusCell $width={54}>L: 97.792</StatusCell>
        <StatusCell $width={55}>C: 97.863</StatusCell>
        <StatusCell $width={53}>V: 9751</StatusCell>
        <StatusCell $width={106}>
          <svg width="19" height="11">
            <path d="M1.500 0v9M4.500 0v8M7.500 0v7M10.500 0v6M13.500 0v4M16.500 0v3" stroke="#7a8438" strokeWidth="2" />
            <path d="M1.500 9v2M4.500 8v3M7.500 7v4M10.500 6v5M13.500 5v6M16.500 3v8" stroke="#1d4566" strokeWidth="2" />
          </svg>
          276370/159 kb
        </StatusCell>
        <svg width="13" height="17">
          <path d="M1 17L13 5M5 17l8-8M9 17l4-4" stroke="#999" />
        </svg>
      </StatusBar>
    </Window>
  );
}

export default App;
